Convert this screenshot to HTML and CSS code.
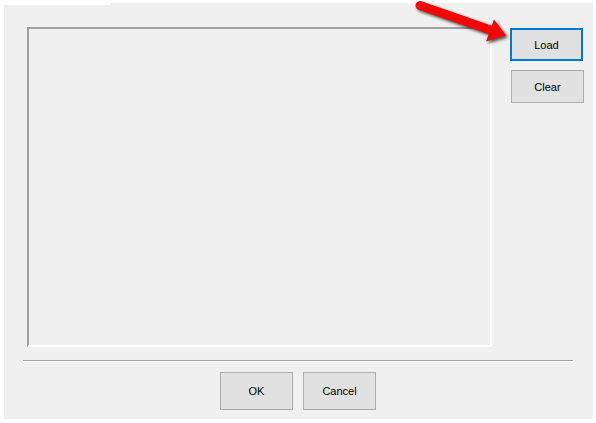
FILE: index.html
```html
<!DOCTYPE html>
<html>
<head>
<meta charset="utf-8">
<link rel="stylesheet" href="styles.css">
</head>
<body>
<div class="window">
  <div class="notch"></div>
  <div class="main">
    <div class="panel"></div>
    <div class="side">
      <button class="btn btn-side btn-focus">Load</button>
      <button class="btn btn-side btn-clear">Clear</button>
    </div>
  </div>
  <div class="separator"></div>
  <div class="footer">
    <button class="btn btn-footer">OK</button>
    <button class="btn btn-footer">Cancel</button>
  </div>
</div>
<svg class="arrow" width="596" height="60" viewBox="0 0 596 60">
  <g class="arrow-shape">
    <line x1="420" y1="5.5" x2="492" y2="30.5" stroke="#ff0000" stroke-width="9" stroke-linecap="round"/>
    <polygon points="486,41.5 494,19.5 506,35.5" fill="#ff0000"/>
  </g>
</svg>
</body>
</html>
```
FILE: styles.css
```css
html, body {
  margin: 0;
  padding: 0;
  background: #ffffff;
}
body {
  width: 596px;
  height: 423px;
  position: relative;
  overflow: hidden;
  font-family: "Liberation Sans", Arial, sans-serif;
}
.window {
  margin: 3px 0 0 4px;
  width: 589px;
  height: 416px;
  background: #f0f0f0;
  display: flex;
  flex-direction: column;
}
.notch {
  width: 106px;
  height: 2px;
  background: #ffffff;
}
.main {
  display: flex;
  margin: 22px 0 0 23px;
}
.panel {
  width: 465px;
  height: 320px;
  box-sizing: border-box;
  border-style: solid;
  border-width: 2px;
  border-color: #a0a0a0 #ffffff #ffffff #a0a0a0;
  background: #f0f0f0;
}
.side {
  display: flex;
  flex-direction: column;
  padding-top: 1px;
}
.btn {
  box-sizing: border-box;
  background: #e1e1e1;
  border: 1px solid #adadad;
  font-family: "Liberation Sans", Arial, sans-serif;
  font-size: 11px;
  color: #000000;
  padding: 0;
  margin: 0;
}
.btn-side {
  width: 73px;
  height: 33px;
  margin-left: 18px;
}
.btn-focus {
  border: 2px solid #0078d7;
}
.btn-clear {
  margin-top: 9px;
  margin-left: 19px;
}
.separator {
  margin: 13px 0 0 19px;
  width: 550px;
  height: 1px;
  background: #a0a0a0;
  border-bottom: 1px solid #ffffff;
}
.footer {
  margin: 10px 0 0 19px;
  width: 550px;
  display: flex;
  justify-content: center;
  gap: 10px;
}
.btn-footer {
  width: 73px;
  height: 38px;
}
.arrow {
  position: absolute;
  left: 0;
  top: 0;
}
.arrow-shape {
  filter: drop-shadow(2px 2px 1.5px rgba(0, 0, 0, 0.65));
}
```
